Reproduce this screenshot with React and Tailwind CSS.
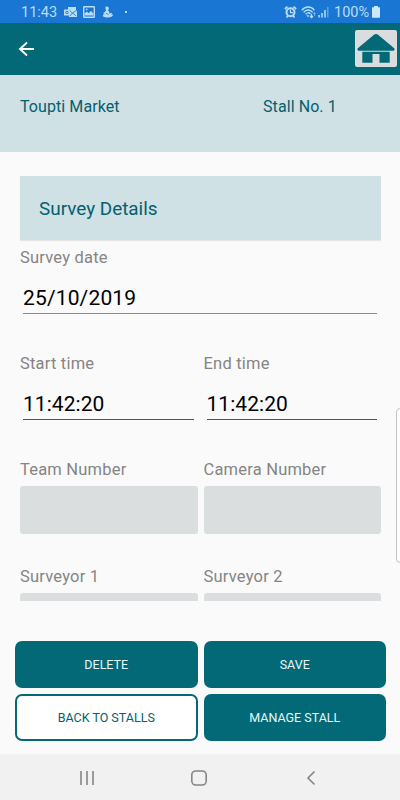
import React from "react";

function StatusBar() {
  return (
    <div className="flex h-[23px] shrink-0 items-center justify-between bg-[#1976d2] pl-[21px] pr-[20px] pt-px text-[#b9ddf8]">
      <div className="flex items-center">
        <span className="w-[36px] whitespace-nowrap pt-[2px] text-[14.5px] leading-[22px]">11:43</span>
        <svg className="ml-[7px]" width="13" height="11" viewBox="0 0 13 11">
          <path d="M4 0h8v3.500h1V10H5V8.500H0V2.500h4z" fill="#b9ddf8" />
          <circle cx="2.900" cy="5.500" r="1.200" fill="none" stroke="#1976d2" strokeWidth="0.900" />
          <path d="M5.500 3.500L8.500 6l4-2.500M6 9l2.500-3 3.500 2.800" fill="none" stroke="#1976d2" strokeWidth="0.800" />
        </svg>
        <svg className="ml-[6px]" width="12" height="12" viewBox="0 0 12 12">
          <rect x="0.700" y="0.700" width="10.600" height="10.600" rx="0.500" fill="none" stroke="#b9ddf8" strokeWidth="1.400" />
          <path d="M1.500 9.500V7.500L4 5.500l1.500 1.700L8 5l2.500 2.500v2z" fill="#b9ddf8" />
          <circle cx="3.700" cy="3.300" r="0.900" fill="#b9ddf8" />
        </svg>
        <svg className="ml-[7px]" width="12" height="12" viewBox="0 0 12 12">
          <path d="M3.500.800Q5.500-.200 6.500 1.200 7.300 3 5.900 4.500 7.600 5 7.300 7.500L10 6.800 9.500 8.400l1.700.2Q10.500 11.500 5.500 11.500 1 11.700.8 9.300q.2-1 2-1.100L1 7.200 3.600 5.300Q4.300 4 3.500 3z" fill="#b9ddf8" />
          <path d="M4 7.300l2.500 1.200" stroke="#1976d2" strokeWidth="0.800" />
        </svg>
        <span className="ml-[11px] h-[2px] w-[2px] bg-[#b9ddf8]" />
      </div>
      <div className="flex items-center">
        <svg width="13" height="12" viewBox="0 0 13 12">
          <path d="M.8 3L3.500.7M12.200 3L9.500.7M2.500 11.500l1.500-1.800M10.500 11.500L9 9.700" stroke="#b9ddf8" strokeWidth="1.700" />
          <circle cx="6.500" cy="6.300" r="4" fill="none" stroke="#b9ddf8" strokeWidth="2" />
          <path d="M6.500 3.800v2.900H9" fill="none" stroke="#b9ddf8" strokeWidth="1.200" />
        </svg>
        <svg className="ml-[4px]" width="16" height="13" viewBox="0 0 16 13">
          <path d="M.8 4.300C4-.1 10.500-.1 13.300 4.300M2.600 6.400C5 3.200 9.300 3.200 11.600 6.300M4.600 8.200C6 6.400 8.300 6.400 9.600 8" fill="none" stroke="#b9ddf8" strokeWidth="1.400" />
          <path d="M5.300 9.200h3.200L7 11.200z" fill="#b9ddf8" />
          <path d="M10.500 8v3.500M9 10l1.500 1.700L12 10" fill="none" stroke="#b9ddf8" strokeWidth="1.200" />
          <path d="M13.500 10V6.500M12.200 8l1.300-1.500L14.800 8" fill="none" stroke="#b9ddf8" strokeOpacity="0.500" strokeWidth="1" />
        </svg>
        <svg className="ml-px" width="11" height="12" viewBox="0 0 11 12">
          <path d="M1.100 9v2.500M4 7v4.500M7 4v7.500" stroke="#b9ddf8" strokeWidth="1.500" />
          <path d="M9.800 1v10.500" stroke="#b9ddf8" strokeOpacity="0.500" strokeWidth="1.300" />
        </svg>
        <span className="ml-[5px] w-[35px] whitespace-nowrap pt-[2px] text-[14.5px] leading-[22px]">100%</span>
        <svg className="ml-[3px]" width="8" height="12" viewBox="0 0 8 12">
          <path d="M2 0h4v1.300h1.200q.8 0 .8.800V11q0 .8-.8.800H.8Q0 11.800 0 11V2.100q0-.8.8-.8H2z" fill="#c9e8fb" />
        </svg>
      </div>
    </div>
  );
}

function AppBar() {
  return (
    <div className="flex h-[52px] shrink-0 items-center justify-between bg-[#046976] pl-[18px] pr-[3px]">
      <svg width="17" height="16" viewBox="0 0 17 16">
        <path d="M16 8H2M9 1.500L2 8l7 6.500" fill="none" stroke="#fff" strokeWidth="1.900" />
      </svg>
      <div className="mt-[-1px] flex h-[37px] w-[42px] items-center justify-center rounded-[2px] bg-[#d9dddd]">
        <svg width="38" height="29" viewBox="0 0 38 29">
          <path d="M17 .700Q19-.500 21 .700L37.500 14.500v1.300l-.8.900H1.300l-.8-.9v-1.300z" fill="#046976" />
          <path d="M5.300 17.700h27.400v11H22.500V20h-7v8.700H5.300z" fill="#046976" />
        </svg>
      </div>
    </div>
  );
}

function Label({ children }) {
  return <div className="h-[33px] whitespace-nowrap text-[16.5px] leading-[33px] tracking-[0.2px] text-[#858585]">{children}</div>;
}

function TimeField({ label, value }) {
  return (
    <div className="flex-1">
      <Label>{label}</Label>
      <div className="ml-[3px] mr-[4px] h-[40px] border-b border-[#555] text-[21px] leading-[48px] tracking-[0.05px] text-black">{value}</div>
    </div>
  );
}

function BoxField({ label }) {
  return (
    <div className="flex-1">
      <Label>{label}</Label>
      <div className="h-[48px] rounded-[3px] bg-[#dadedf]" />
    </div>
  );
}

function Button({ children, outlined }) {
  return (
    <button
      className={
        outlined
          ? "h-[47px] rounded-[7px] border-2 border-[#046976] bg-white pt-[2px] text-[12.5px] text-[#04606d]"
          : "h-[47px] rounded-[7px] bg-[#046976] pt-[2px] text-[12.5px] text-[#e4f8fa]"
      }
    >
      {children}
    </button>
  );
}

export default function App() {
  return (
    <div className="relative flex h-[800px] w-[400px] flex-col overflow-hidden bg-[#fafafa] font-['Roboto',sans-serif]">
      <StatusBar />
      <AppBar />
      <div className="flex h-[77px] shrink-0 bg-[#cfe1e5] pl-[20px] pt-[20px] text-[16px] leading-6 tracking-[0.08px] text-[#04606d]">
        <span className="w-[243px]">Toupti Market</span>
        <span>Stall No. 1</span>
      </div>

      <div className="mt-6 h-[425px] shrink-0 overflow-hidden pl-[20px] pr-[19px]">
        <div className="h-[64px] bg-[#cfe1e5] pl-[19px] text-[18.9px] leading-[66px] text-[#04606d] shadow-[0_1px_1px_rgba(0,0,0,0.08)]">
          Survey Details
        </div>
        <div className="h-[107px] pt-px">
          <Label>Survey date</Label>
          <div className="ml-[3px] mr-[4px] h-[40px] border-b border-[#8c8c8c] text-[21px] leading-[48px] tracking-[0.15px] text-black">25/10/2019</div>
        </div>
        <div className="flex h-[106px] gap-[6px]">
          <TimeField label="Start time" value="11:42:20" />
          <TimeField label="End time" value="11:42:20" />
        </div>
        <div className="flex h-[107px] gap-[6px]">
          <BoxField label="Team Number" />
          <BoxField label="Camera Number" />
        </div>
        <div className="flex gap-[6px]">
          <BoxField label="Surveyor 1" />
          <BoxField label="Surveyor 2" />
        </div>
      </div>

      <div className="mt-[40px] grid shrink-0 grid-cols-2 gap-[6px] pl-[15px] pr-[14px]">
        <Button>DELETE</Button>
        <Button>SAVE</Button>
        <Button outlined>BACK TO STALLS</Button>
        <Button>MANAGE STALL</Button>
      </div>

      <div className="mt-auto flex h-[46px] shrink-0 items-center bg-[#f1f1f1] pl-[79px] pt-[2px]">
        <svg width="16" height="16" viewBox="0 0 16 16">
          <path d="M2 1v14M8 1v14M14 1v14" stroke="#858585" strokeWidth="1.600" />
        </svg>
        <svg className="ml-[95px]" width="18" height="16" viewBox="0 0 18 16">
          <rect x="1.800" y="1" width="14.400" height="14" rx="4" fill="none" stroke="#858585" strokeWidth="1.600" />
        </svg>
        <svg className="ml-[98px]" width="10" height="16" viewBox="0 0 10 16">
          <path d="M8.500 1.500L2 8l6.500 6.500" fill="none" stroke="#858585" strokeWidth="1.600" />
        </svg>
      </div>

      <div className="absolute right-[-6px] top-[408px] h-[155px] w-[10px] rounded-[4px] border border-[#c4c4c4] bg-[#fcfcfc]" />
    </div>
  );
}
